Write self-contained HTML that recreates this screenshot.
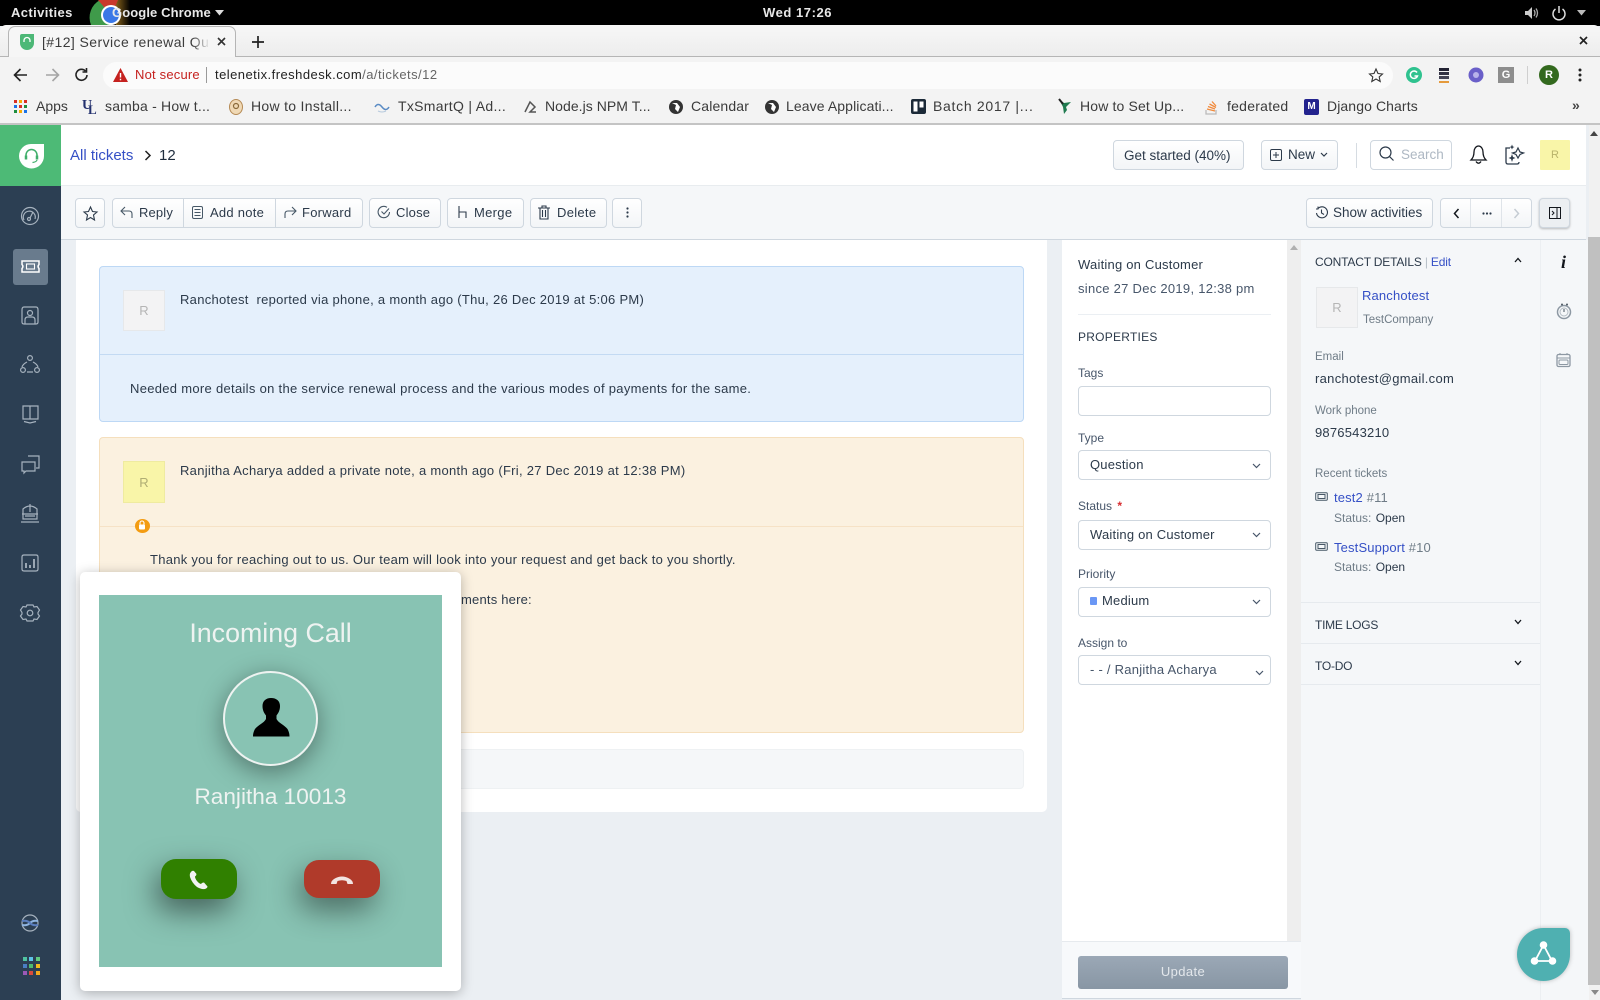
<!DOCTYPE html>
<html><head><meta charset="utf-8"><title>Ticket 12</title>
<style>
*{box-sizing:border-box}
html,body{margin:0;padding:0;width:1600px;height:1000px;overflow:hidden;background:#ebeff3;font-family:"Liberation Sans",sans-serif;color:#1f2d3d}
.a,.t{position:absolute}
.t{white-space:nowrap;line-height:20px;height:20px;font-size:13px;color:#2c3a4a}
.btn{position:absolute;top:198px;height:30px;background:linear-gradient(#fff,#f3f5f7);border:1px solid #cfd7df;border-radius:4px}
svg{position:absolute;overflow:visible;fill:none}
.sel{position:absolute;left:1078px;width:193px;height:30px;background:#fff;border:1px solid #cfd7df;border-radius:4px}
.lbl{color:#47566a;font-size:12px}
.g{color:#6f7c87;font-size:12px}
.lnk{color:#3550c6}
.b{font-size:14px;color:#3b3b3b}
</style></head><body>

<!-- GNOME top bar -->
<div class="a" style="left:0;top:0;width:1600px;height:26px;background:#000"></div>
<svg style="left:88px;top:0" width="42" height="25" viewBox="0 0 42 25">
<defs><linearGradient id="fd" x1="0" x2="1" y1="0" y2="0"><stop offset="0" stop-color="#a87a20"/><stop offset="1" stop-color="#000"/></linearGradient></defs>
<path d="M3 25A20 20 0 0 1 12 0H22V25Z" fill="#3f9a4a"/>
<path d="M10 0H36V14H22Z" fill="#c9392c"/>
<path d="M30 0H42V25H28L24 14Z" fill="url(#fd)"/>
<circle cx="23" cy="15" r="10" fill="#fff"/><circle cx="23" cy="15" r="8" fill="#3b78e7"/></svg>
<div class="t" style="left:11px;top:3px;color:#e8e8e8;font-size:13px;font-weight:bold;letter-spacing:.4px">Activities</div>
<div class="t" style="left:112px;top:3px;color:#e8e8e8;font-size:13px;font-weight:bold;letter-spacing:.1px">Google Chrome</div>
<svg style="left:215px;top:10px" width="10" height="6"><path d="M0 0H9L4.5 5.5Z" fill="#ddd"/></svg>
<div class="t" style="left:763px;top:3px;color:#e8e8e8;font-size:13px;font-weight:bold;letter-spacing:.55px">Wed 17:26</div>
<svg style="left:1524px;top:6px" width="15" height="14"><path d="M1 5H4L8 1V13L4 9H1Z" fill="#ccc"/><path d="M10 4Q12 7 10 10M12 2.5Q15 7 12 11.5" stroke="#aaa" stroke-width="1.3"/></svg>
<svg style="left:1551px;top:5px" width="16" height="16"><path d="M4.5 4A6 6 0 1 0 11.5 4M8 1V8" stroke="#ddd" stroke-width="1.5"/></svg>
<svg style="left:1577px;top:10px" width="10" height="6"><path d="M0 0H9L4.5 5.5Z" fill="#bbb"/></svg>

<!-- Chrome -->
<div class="a" style="left:0;top:25px;width:1600px;height:32px;background:linear-gradient(#f7f7f7,#ededed);border-radius:6px 6px 0 0;border-bottom:1px solid #b5b5b5"></div>
<div class="a" style="left:8px;top:26px;width:228px;height:32px;background:#f6f6f6;border:1px solid #b5b5b5;border-bottom:none;border-radius:7px 7px 0 0"></div>
<svg style="left:19px;top:33px" width="16" height="17"><path d="M1 3Q1 1 3 1H15V10A6 6 0 0 1 1 10Z" fill="#4db877"/><path d="M5 9V7.5A3 3 0 0 1 11 7.5V9" stroke="#fff" stroke-width="1.3"/></svg>
<div class="t" style="left:42px;top:32px;font-size:14px;color:#3c3c3c;width:168px;overflow:hidden;letter-spacing:.42px">[#12] Service renewal Qu</div>
<div class="a" style="left:192px;top:32px;width:18px;height:20px;background:linear-gradient(90deg,rgba(246,246,246,0),#f6f6f6)"></div>
<svg style="left:217px;top:37px" width="9" height="9"><path d="M1 1L8 8M8 1L1 8" stroke="#333" stroke-width="1.6"/></svg>
<svg style="left:251px;top:35px" width="14" height="14"><path d="M7 1V13M1 7H13" stroke="#222" stroke-width="1.7"/></svg>
<svg style="left:1579px;top:36px" width="9" height="9"><path d="M1 1L8 8M8 1L1 8" stroke="#222" stroke-width="1.7"/></svg>

<div class="a" style="left:0;top:57px;width:1600px;height:67px;background:#f3f3f3"></div>
<svg style="left:13px;top:67px" width="16" height="16"><path d="M14 8H2M7.5 2L1.5 8L7.5 14" stroke="#222" stroke-width="1.6"/></svg>
<svg style="left:44px;top:67px" width="16" height="16"><path d="M2 8H14M8.5 2L14.5 8L8.5 14" stroke="#a5a5a5" stroke-width="1.6"/></svg>
<svg style="left:74px;top:67px" width="16" height="16"><path d="M13 8A5.5 5.5 0 1 1 11.5 4M12.5 1V5H8.5" stroke="#222" stroke-width="1.6"/></svg>
<div class="a" style="left:103px;top:62px;width:1290px;height:27px;background:#fbfbfb;border-radius:14px"></div>
<svg style="left:113px;top:68px" width="15" height="14"><path d="M7.5 0L15 14H0Z" fill="#c5221f"/><path d="M7.5 5V9.5M7.5 10.7V12.2" stroke="#fff" stroke-width="1.4"/></svg>
<div class="t" style="left:135px;top:65px;font-size:13px;color:#c5221f;letter-spacing:.2px">Not secure</div>
<div class="a" style="left:206px;top:67px;width:1px;height:16px;background:#9a9a9a"></div>
<div class="t" style="left:215px;top:65px;font-size:13px;color:#222;letter-spacing:.46px">telenetix.freshdesk.com<span style="color:#666">/a/tickets/12</span></div>
<svg style="left:1369px;top:68px" width="14" height="14"><path d="M7 1L9 5.5L13.500 6L10.200 9L11.200 13.500L7 11L2.800 13.500L3.800 9L.5 6L5 5.500Z" stroke="#333" stroke-width="1.100"/></svg>
<svg style="left:1406px;top:67px" width="16" height="16"><circle cx="8" cy="8" r="8" fill="#2fc28f"/><path d="M11 5.5A3.7 3.7 0 1 0 11.5 9H8.5" stroke="#fff" stroke-width="1.5"/></svg>
<svg style="left:1438px;top:68px" width="12" height="16"><rect x="1" y="0" width="10" height="3" fill="#223"/><rect x="1" y="4" width="10" height="3" fill="#334"/><rect x="1" y="8" width="10" height="3" fill="#445"/><rect x="1" y="13" width="10" height="2" fill="#e59a3c"/></svg>
<svg style="left:1468px;top:67px" width="16" height="16"><circle cx="8" cy="8" r="7.5" fill="#6a5fc9"/><circle cx="8" cy="8" r="3" fill="#b8b2ea"/></svg>
<div class="a" style="left:1498px;top:67px;width:16px;height:16px;background:#8d8d8d;color:#fff;font-size:11px;line-height:16px;text-align:center;font-weight:bold">G</div>
<div class="a" style="left:1527px;top:66px;width:1px;height:18px;background:#cfcfcf"></div>
<div class="a" style="left:1539px;top:65px;width:20px;height:20px;background:#33691e;border-radius:50%;color:#fff;font-size:11px;line-height:20px;text-align:center;font-weight:bold">R</div>
<svg style="left:1578px;top:68px" width="4" height="14"><circle cx="2" cy="2" r="1.5" fill="#222"/><circle cx="2" cy="7" r="1.5" fill="#222"/><circle cx="2" cy="12" r="1.5" fill="#222"/></svg>

<!-- Bookmarks -->
<svg style="left:14px;top:100px" width="14" height="14"><g><rect width="3" height="3" fill="#d93025"/><rect x="5" width="3" height="3" fill="#f9ab00"/><rect x="10" width="3" height="3" fill="#d93025"/><rect y="5" width="3" height="3" fill="#1a73e8"/><rect x="5" y="5" width="3" height="3" fill="#d93025"/><rect x="10" y="5" width="3" height="3" fill="#1e8e3e"/><rect y="10" width="3" height="3" fill="#1e8e3e"/><rect x="5" y="10" width="3" height="3" fill="#f9ab00"/><rect x="10" y="10" width="3" height="3" fill="#1a73e8"/></g></svg>
<div class="t b" style="left:36px;top:96px">Apps</div>
<div class="t" style="left:82px;top:96px;font-size:14px;font-weight:bold;color:#23306e;font-family:'Liberation Serif',serif">U</div>
<div class="t" style="left:88px;top:100px;font-size:13px;font-weight:bold;color:#23306e;font-family:'Liberation Serif',serif">L</div>
<div class="t b" style="left:105px;top:96px;letter-spacing:.2px">samba - How t...</div>
<svg style="left:229px;top:99px" width="14" height="16"><ellipse cx="7" cy="8" rx="6.5" ry="7.5" fill="#f0d9b5" stroke="#b58a55"/><circle cx="7" cy="7" r="2.5" stroke="#8a6a3a" stroke-width="1.2"/></svg>
<div class="t b" style="left:251px;top:96px;letter-spacing:.3px">How to Install...</div>
<svg style="left:374px;top:101px" width="16" height="12"><path d="M1 6Q4 1 8 6T15 6" stroke="#5a8bc4" stroke-width="1.5"/><path d="M4 10Q8 12 12 10" stroke="#b6c9dd"/></svg>
<div class="t b" style="left:398px;top:96px;letter-spacing:.3px">TxSmartQ | Ad...</div>
<svg style="left:523px;top:100px" width="15" height="14"><path d="M2 12L7 2L12 7L7 12H13" stroke="#555" stroke-width="1.5"/></svg>
<div class="t b" style="left:545px;top:96px;letter-spacing:.05px">Node.js NPM T...</div>
<svg style="left:669px;top:100px" width="14" height="14"><circle cx="7" cy="7" r="7" fill="#333"/><path d="M3 3L7 5L6 9L9 12L11 7L8 3Z" fill="#fff"/></svg>
<div class="t b" style="left:691px;top:96px;letter-spacing:.15px">Calendar</div>
<svg style="left:765px;top:100px" width="14" height="14"><circle cx="7" cy="7" r="7" fill="#333"/><path d="M3 3L7 5L6 9L9 12L11 7L8 3Z" fill="#fff"/></svg>
<div class="t b" style="left:786px;top:96px;letter-spacing:.1px">Leave Applicati...</div>
<svg style="left:911px;top:99px" width="15" height="15"><rect width="15" height="15" rx="2" fill="#1c2a38"/><rect x="2.5" y="2.5" width="4" height="10" fill="#fff"/><rect x="8.5" y="2.5" width="4" height="6" fill="#fff"/></svg>
<div class="t b" style="left:933px;top:96px;letter-spacing:.7px">Batch 2017 |...</div>
<svg style="left:1058px;top:98px" width="14" height="17"><path d="M1 1L6 5L13 4L8 9L9 12L6 16L5 9Z" fill="#1f7a4f"/><path d="M1 1L5 6" stroke="#222" stroke-width="2"/></svg>
<div class="t b" style="left:1080px;top:96px;letter-spacing:.15px">How to Set Up...</div>
<svg style="left:1205px;top:99px" width="13" height="16"><path d="M2 10L10 12M3 7.5L10 10M4.5 5L11 8.5M7 2.5L11 7" stroke="#f18a3c" stroke-width="1.3"/><path d="M1 11V15H11V11" stroke="#bcbbbb" stroke-width="1.3"/></svg>
<div class="t b" style="left:1227px;top:96px;letter-spacing:.25px">federated</div>
<div class="a" style="left:1304px;top:99px;width:15px;height:16px;background:#23238e;border-radius:2px;color:#fff;font-size:10px;line-height:15px;text-align:center;font-weight:bold">M</div>
<div class="t b" style="left:1327px;top:96px;letter-spacing:.1px">Django Charts</div>
<div class="t" style="left:1572px;top:95px;font-size:14px;color:#444;font-weight:bold">»</div>
<div class="a" style="left:0;top:123px;width:1600px;height:2px;background:#c4c4c4"></div>

<!-- App sidebar -->
<div class="a" style="left:0;top:125px;width:61px;height:875px;background:#2c3f53"></div>
<div class="a" style="left:0;top:125px;width:61px;height:61px;background:#4dba76"></div>
<svg style="left:18px;top:143px" width="27" height="26"><path d="M1 13A12 12 0 0 1 13 1H26V13A12.500 12.500 0 0 1 1 13Z" fill="#fff"/><path d="M8 15V12A5.500 5.500 0 0 1 19 12V15" stroke="#3fae6a" stroke-width="1.500"/><path d="M8 12.500V16.500M19 12.500V16.500" stroke="#3fae6a" stroke-width="2.500"/><path d="M19 17Q18.500 19 14.500 19.500" stroke="#3fae6a" stroke-width="1.200"/></svg>
<div class="a" style="left:13px;top:249px;width:35px;height:36px;background:#697b8d;border-radius:3px"></div>
<svg style="left:0;top:0" width="61" height="1000">
<g stroke="#a6b2be" stroke-width="1.2">
<circle cx="30" cy="216" r="8.500"/><path d="M24 220A6 6 0 1 1 35 219"/><circle cx="29" cy="219" r="1.500"/><path d="M30 218L33 212"/>
<path d="M22 310Q22 307 24 307H36Q38 307 38 310V322Q38 324 36 324H24Q22 324 22 322Z"/><circle cx="30" cy="313" r="2.500"/><path d="M25 324V320Q25 317 28 317H32Q35 317 35 320V324"/>
<circle cx="30" cy="358" r="2.400"/><circle cx="23" cy="370" r="2.400"/><circle cx="37" cy="370" r="2.400"/><path d="M27 362Q23 364 22 367M33 362Q37 364 38 367M27 372H33"/>
<path d="M23 406H30V419H23ZM30 406H38V419H30ZM24 421.500L30 423L36 421.500"/>
<path d="M28 456H39V468H36M22 462H35V471H26L24 473V471H22Z"/>
<path d="M23 514V509Q30 503 37 509V514M22 514H38M23 514V519H37V514M30 504V512M21 522H39M25 516H35"/>
<path d="M22 557Q22 555 24 555H36Q38 555 38 557V569Q38 571 36 571H24Q22 571 22 569Z"/><path d="M26 568V563M30 568V565M34 568V559" stroke-width="1.800"/>
<circle cx="30" cy="613" r="2.800"/><path d="M27 605L33 605L34 607L37 606.500L39.500 610L38 612.500V614L39.500 616L37 619.500L34 619L33 621H27L26 619L23 619.500L20.500 616L22 614V612.500L20.500 610L23 606.500L26 607Z"/>
<circle cx="30" cy="923" r="8"/>
</g>
<path d="M22 261H39V264.500Q37.200 266.500 39 268.500V272H22V268.500Q23.800 266.500 22 264.500Z" stroke="#fff" stroke-width="1.500"/><rect x="26.500" y="264" width="8" height="5" stroke="#fff" stroke-width="1.100"/>
<path d="M22 925Q27 926 30 923T38 921" stroke="#8fb4e0" stroke-width="2"/><path d="M22 921Q27 920 30 923T38 925" stroke="#5b7fc0" stroke-width="2"/>
<g><rect x="23" y="957" width="4" height="4" fill="#4fc3a1"/><rect x="29" y="957" width="4" height="4" fill="#5ec2e6"/><rect x="36" y="957" width="4" height="4" fill="#63c97d"/>
<rect x="23" y="964" width="4" height="4" fill="#4a7fc4"/><rect x="29" y="964" width="4" height="4" fill="#4fbb6e"/><rect x="36" y="964" width="4" height="4" fill="#f2b91c"/>
<rect x="23" y="971" width="4" height="4" fill="#9b59b6"/><rect x="29" y="971" width="4" height="4" fill="#d94b3d"/><rect x="36" y="971" width="4" height="4" fill="#f2a91c"/></g>
</svg>

<!-- Header -->
<div class="a" style="left:61px;top:125px;width:1525px;height:61px;background:#fff;border-bottom:1px solid #e8ecef"></div>
<div class="t" style="left:70px;top:146px;font-size:15px;color:#3550c6">All tickets</div>
<svg style="left:144px;top:150px" width="8" height="11"><path d="M1.5 1L6 5.5L1.500 10" stroke="#222" stroke-width="1.500"/></svg>
<div class="t" style="left:159px;top:146px;font-size:15px;color:#1f2d3d">12</div>
<div class="btn" style="left:1113px;top:140px;width:131px;height:30px"></div>
<div class="t" style="left:1124px;top:146px;font-size:13.500px;color:#2c3a4a">Get started (40%)</div>
<div class="btn" style="left:1261px;top:140px;width:77px;height:30px"></div>
<svg style="left:1270px;top:149px" width="12" height="12"><rect x=".5" y=".5" width="11" height="11" rx="1.500" stroke="#2c3a4a"/><path d="M6 3V9M3 6H9" stroke="#2c3a4a"/></svg>
<div class="t" style="left:1288px;top:145px;font-size:13.500px;color:#2c3a4a">New</div>
<svg style="left:1320px;top:152px" width="8" height="6"><path d="M1 1L4 4L7 1" stroke="#2c3a4a" stroke-width="1.200"/></svg>
<div class="a" style="left:1356px;top:143px;width:1px;height:25px;background:#d6dce2"></div>
<div class="a" style="left:1370px;top:140px;width:82px;height:30px;background:#fff;border:1px solid #cfd7df;border-radius:4px"></div>
<svg style="left:1379px;top:146px" width="15" height="15"><circle cx="6.500" cy="6.500" r="5.500" stroke="#2c3a4a" stroke-width="1.200"/><path d="M10.500 10.500L14.500 14.500" stroke="#2c3a4a" stroke-width="1.200"/></svg>
<div class="t" style="left:1401px;top:145px;font-size:13.500px;color:#aeb8c3">Search</div>
<svg style="left:1469px;top:143px" width="19" height="23"><path d="M2 17Q5 14 5 9A4.500 6 0 0 1 14 9Q14 14 17 17Z" stroke="#12161c" stroke-width="1.300"/><path d="M7 18.500Q9.500 22 12 18.500" stroke="#12161c" stroke-width="1.300"/></svg>
<svg style="left:1503px;top:143px" width="22" height="23"><path d="M7 5H3V19Q3 21 5 21H14Q16 21 16 19" stroke="#2c3a4a" stroke-width="1.300"/><path d="M15 5L17 9L20.500 10L17 11.500L15 15L13 11.500L9.500 10L13 9Z" stroke="#2c3a4a" stroke-width="1.200"/><path d="M9 11L10 14L12.500 15L10 16L9 19L8 16L5.500 15L8 14Z" fill="#2c3a4a"/><path d="M9 1.500L9.800 3.500L11.500 4L9.800 4.700L9 6.500L8.200 4.700L6.500 4L8.200 3.500Z" fill="#2c3a4a"/></svg>
<div class="a" style="left:1540px;top:140px;width:30px;height:30px;background:#f9f5a8;border-radius:1px;color:#b9b36a;font-size:11px;line-height:30px;text-align:center">R</div>

<!-- Toolbar -->
<div class="a" style="left:61px;top:186px;width:1525px;height:54px;background:#f5f7f9;border-bottom:1px solid #cfd7df"></div>
<div class="btn" style="left:75px;width:30px"></div>
<svg style="left:83px;top:206px" width="15" height="15"><path d="M7.500 1L9.500 5.500L14 6L10.500 9L11.500 14L7.500 11.500L3.500 14L4.500 9L1 6L5.500 5.500Z" stroke="#2c3a4a" stroke-width="1.100"/></svg>
<div class="btn" style="left:112px;width:251px"></div>
<div class="a" style="left:183px;top:199px;width:1px;height:28px;background:#cfd7df"></div>
<div class="a" style="left:275px;top:199px;width:1px;height:28px;background:#cfd7df"></div>
<svg style="left:120px;top:205px" width="14" height="14"><path d="M5 2L1 6L5 10M1 6H9Q12 6 12 9V13" stroke="#475867" stroke-width="1.100"/></svg>
<div class="t" style="left:139px;top:203px;color:#2c3a4a;letter-spacing:.15px">Reply</div>
<svg style="left:192px;top:206px" width="11" height="14"><rect x=".5" y=".5" width="10" height="12" rx="1.500" stroke="#475867"/><path d="M2.500 3.500H8.500M2.500 6.500H8.500M2.500 9.500H8.500" stroke="#475867"/></svg>
<div class="t" style="left:210px;top:203px;color:#2c3a4a;letter-spacing:.25px">Add note</div>
<svg style="left:283px;top:205px" width="14" height="14"><path d="M9 2L13 6L9 10M13 6H5Q2 6 2 9V13" stroke="#475867" stroke-width="1.100"/></svg>
<div class="t" style="left:302px;top:203px;color:#2c3a4a;letter-spacing:.25px">Forward</div>
<div class="btn" style="left:369px;width:72px"></div>
<svg style="left:377px;top:205px" width="14" height="14"><path d="M12.500 7A5.700 5.700 0 1 1 10 2.300" stroke="#475867" stroke-width="1.100"/><path d="M4.500 6.500L7 9L12 3.500" stroke="#475867" stroke-width="1.100"/></svg>
<div class="t" style="left:396px;top:203px;color:#2c3a4a;letter-spacing:.2px">Close</div>
<div class="btn" style="left:447px;width:77px"></div>
<svg style="left:457px;top:205px" width="11" height="14"><path d="M2 1V13M2 7H9V13" stroke="#2c3a4a" stroke-width="1.100"/></svg>
<div class="t" style="left:474px;top:203px;color:#2c3a4a;letter-spacing:.3px">Merge</div>
<div class="btn" style="left:530px;width:77px"></div>
<svg style="left:538px;top:205px" width="12" height="15"><path d="M0 3H12M4 3V1H8V3M2 3V14H10V3M4.500 5V12M7.500 5V12" stroke="#2c3a4a" stroke-width="1.100"/></svg>
<div class="t" style="left:557px;top:203px;color:#2c3a4a;letter-spacing:.3px">Delete</div>
<div class="btn" style="left:612px;width:30px"></div>
<svg style="left:626px;top:207px" width="3" height="11"><circle cx="1.500" cy="1.500" r="1.100" fill="#2c3a4a"/><circle cx="1.500" cy="5.500" r="1.100" fill="#2c3a4a"/><circle cx="1.500" cy="9.500" r="1.100" fill="#2c3a4a"/></svg>

<div class="btn" style="left:1306px;width:127px"></div>
<svg style="left:1315px;top:206px" width="13" height="13"><path d="M3 2.500A5.500 5.500 0 1 1 1.500 7M6.500 3.500V7L9 8.500" stroke="#2c3a4a" stroke-width="1.100"/><path d="M3 .5V3H1" stroke="#2c3a4a"/></svg>
<div class="t" style="left:1333px;top:203px;font-size:13.500px;color:#2c3a4a">Show activities</div>
<div class="btn" style="left:1440px;width:92px"></div>
<div class="a" style="left:1470px;top:199px;width:1px;height:28px;background:#dfe4e9"></div>
<div class="a" style="left:1501px;top:199px;width:1px;height:28px;background:#dfe4e9"></div>
<svg style="left:1453px;top:208px" width="7" height="11"><path d="M5.500 1L1.500 5.500L5.500 10" stroke="#12161c" stroke-width="1.500"/></svg>
<svg style="left:1482px;top:212px" width="10" height="3"><circle cx="1.500" cy="1.500" r="1.100" fill="#2c3a4a"/><circle cx="5" cy="1.500" r="1.100" fill="#2c3a4a"/><circle cx="8.500" cy="1.500" r="1.100" fill="#2c3a4a"/></svg>
<svg style="left:1513px;top:208px" width="7" height="11"><path d="M1.500 1L5.500 5.500L1.500 10" stroke="#c5ccd3" stroke-width="1.500"/></svg>
<div class="btn" style="left:1539px;width:31px;background:#eceff2;box-shadow:0 1px 2px rgba(0,0,0,.25)"></div>
<svg style="left:1549px;top:207px" width="12" height="12"><rect x=".5" y=".5" width="11" height="11" stroke="#12161c"/><path d="M8 .5V11.500" stroke="#12161c"/><path d="M3 4L5 6L3 8" stroke="#12161c"/></svg>

<!-- Main ticket card -->
<div class="a" style="left:76px;top:240px;width:971px;height:572px;background:#fff;border-radius:0 0 5px 5px"></div>
<div class="a" style="left:99px;top:266px;width:925px;height:156px;background:#e5f0fc;border:1px solid #bdd8f5;border-radius:4px"></div>
<div class="a" style="left:100px;top:354px;width:923px;height:1px;background:#c3daf3"></div>
<div class="a" style="left:123px;top:290px;width:42px;height:41px;background:#f3f3f4;border:1px solid #e6e8ea;color:#b5b5b5;font-size:13px;line-height:40px;text-align:center">R</div>
<div class="t" style="left:180px;top:290px;letter-spacing:.29px">Ranchotest&nbsp; reported via phone, a month ago (Thu, 26 Dec 2019 at 5:06 PM)</div>
<div class="t" style="left:130px;top:378.500px;letter-spacing:.3px">Needed more details on the service renewal process and the various modes of payments for the same.</div>

<div class="a" style="left:99px;top:437px;width:925px;height:296px;background:#fbf1e0;border:1px solid #f5dfbd;border-radius:4px"></div>
<div class="a" style="left:100px;top:526px;width:923px;height:1px;background:#f6e2c6"></div>
<div class="a" style="left:123px;top:461px;width:42px;height:42px;background:#f9f5a8;border:1px solid #efeba0;color:#b0ad74;font-size:13px;line-height:41px;text-align:center">R</div>
<div class="t" style="left:180px;top:461px;letter-spacing:.29px">Ranjitha Acharya added a private note, a month ago (Fri, 27 Dec 2019 at 12:38 PM)</div>
<div class="a" style="left:134.500px;top:518.500px;width:15px;height:14px;border-radius:50%;background:#f39c12"></div>
<svg style="left:138px;top:520px" width="8" height="10"><path d="M2 4.500V3A2 2 0 0 1 6 3V4.500" stroke="#fff" stroke-width="1.100"/><rect x="1" y="4.500" width="6" height="5" rx="1" fill="#fff"/></svg>
<div class="t" style="left:150px;top:549.500px;letter-spacing:.27px">Thank you for reaching out to us. Our team will look into your request and get back to you shortly.</div>
<div class="t" style="left:461px;top:589.500px;letter-spacing:.2px">ments here:</div>
<div class="a" style="left:99px;top:749px;width:925px;height:40px;background:#f5f7f9;border:1px solid #eef1f3;border-radius:4px"></div>

<!-- Properties panel -->
<div class="a" style="left:1062px;top:240px;width:225px;height:702px;background:#fff"></div>
<div class="a" style="left:1287px;top:240px;width:14px;height:702px;background:#eeeeee"></div>
<svg style="left:1290px;top:245px" width="8" height="5"><path d="M0 5H8L4 0Z" fill="#b0b0b0"/></svg>
<div class="t" style="left:1078px;top:255px;letter-spacing:.22px">Waiting on Customer</div>
<div class="t" style="left:1078px;top:279px;letter-spacing:.28px;color:#47566a">since 27 Dec 2019, 12:38 pm</div>
<div class="a" style="left:1078px;top:314px;width:193px;height:1px;background:#ebeff3"></div>
<div class="t" style="left:1078px;top:327px;font-size:12px;color:#2c3a4a;letter-spacing:.25px">PROPERTIES</div>
<div class="t lbl" style="left:1078px;top:363px">Tags</div>
<div class="sel" style="top:386px"></div>
<div class="t lbl" style="left:1078px;top:428px">Type</div>
<div class="sel" style="top:450px"></div>
<div class="t" style="left:1090px;top:455px;letter-spacing:.2px">Question</div>
<div class="t lbl" style="left:1078px;top:496px">Status <span style="color:#d72d30;font-weight:bold;margin-left:2px">*</span></div>
<div class="sel" style="top:520px"></div>
<div class="t" style="left:1090px;top:525px;letter-spacing:.2px">Waiting on Customer</div>
<div class="t lbl" style="left:1078px;top:564px">Priority</div>
<div class="sel" style="top:587px"></div>
<div class="a" style="left:1090px;top:597px;width:7px;height:8px;background:#6a97f5;border-radius:1px"></div>
<div class="t" style="left:1102px;top:591px;letter-spacing:.2px">Medium</div>
<div class="t lbl" style="left:1078px;top:633px">Assign to</div>
<div class="sel" style="top:655px"></div>
<div class="t" style="left:1090px;top:660px;letter-spacing:.25px;color:#47566a">- - / Ranjitha Acharya</div>
<svg style="left:1252px;top:463px" width="9" height="6"><path d="M1 1L4.500 4.500L8 1" stroke="#47566a" stroke-width="1.200"/></svg>
<svg style="left:1252px;top:532px" width="9" height="6"><path d="M1 1L4.500 4.500L8 1" stroke="#47566a" stroke-width="1.200"/></svg>
<svg style="left:1252px;top:599px" width="9" height="6"><path d="M1 1L4.500 4.500L8 1" stroke="#47566a" stroke-width="1.200"/></svg>
<svg style="left:1255px;top:670px" width="9" height="6"><path d="M1 1L4.500 4.500L8 1" stroke="#47566a" stroke-width="1.200"/></svg>

<!-- Update footer -->
<div class="a" style="left:1062px;top:941px;width:239px;height:58px;background:#f7f9fb;border-top:1px solid #e6eaee;border-bottom:1px solid #cfd7df"></div>
<div class="a" style="left:1078px;top:956px;width:210px;height:33px;background:linear-gradient(#9ba8b6,#8896a4);border-radius:3px;color:#e3e7eb;font-size:13px;line-height:32px;text-align:center;letter-spacing:.4px">Update</div>

<!-- Contact panel -->
<div class="a" style="left:1301px;top:240px;width:239px;height:760px;background:#f5f7f9"></div>
<div class="a" style="left:1540px;top:240px;width:49px;height:760px;background:#f5f7f9;border-left:1px solid #eceff2"></div>
<div class="a" style="left:1589px;top:125px;width:11px;height:875px;background:#f1f1f1"></div>
<div class="a" style="left:1588px;top:237px;width:12px;height:748px;background:#c0c0c0"></div>
<svg style="left:1590px;top:131px" width="8" height="5"><path d="M0 5H8L4 0Z" fill="#444"/></svg>
<svg style="left:1591px;top:990px" width="8" height="5"><path d="M0 0H8L4 5Z" fill="#888"/></svg>
<div class="t" style="left:1315px;top:252px;font-size:12px;color:#2c3a4a;letter-spacing:-.18px">CONTACT DETAILS <span style="color:#b6bec6">|</span> <span class="lnk">Edit</span></div>
<svg style="left:1514px;top:257px" width="8" height="6"><path d="M1 5L4 1.500L7 5" stroke="#12161c" stroke-width="1.300"/></svg>
<div class="a" style="left:1316px;top:287px;width:42px;height:41px;background:#f3f3f4;border:1px solid #e6e8ea;color:#b5b5b5;font-size:13px;line-height:40px;text-align:center">R</div>
<div class="t lnk" style="left:1362px;top:286px;letter-spacing:.15px">Ranchotest</div>
<div class="t g" style="left:1363px;top:310px;font-size:11.500px">TestCompany</div>
<div class="t g" style="left:1315px;top:347px;font-size:11.500px">Email</div>
<div class="t" style="left:1315px;top:369px;letter-spacing:.3px">ranchotest@gmail.com</div>
<div class="t g" style="left:1315px;top:401px;font-size:11.500px">Work phone</div>
<div class="t" style="left:1315px;top:423px;letter-spacing:.2px">9876543210</div>
<div class="t g" style="left:1315px;top:464px;font-size:11.500px">Recent tickets</div>
<svg style="left:1315px;top:492px" width="13" height="9"><rect x=".7" y=".7" width="11.600" height="7.600" rx="1" stroke="#475867"/><rect x="3" y="2.500" width="7" height="4" stroke="#475867"/></svg>
<div class="t" style="left:1334px;top:487.500px;letter-spacing:.15px"><span class="lnk">test2</span> <span style="color:#6f7c87">#11</span></div>
<div class="t g" style="left:1334px;top:507.500px">Status: <span style="color:#2c3a4a;margin-left:1px">Open</span></div>
<svg style="left:1315px;top:542px" width="13" height="9"><rect x=".7" y=".7" width="11.600" height="7.600" rx="1" stroke="#475867"/><rect x="3" y="2.500" width="7" height="4" stroke="#475867"/></svg>
<div class="t" style="left:1334px;top:537.500px;letter-spacing:.15px"><span class="lnk">TestSupport</span> <span style="color:#6f7c87">#10</span></div>
<div class="t g" style="left:1334px;top:556.500px">Status: <span style="color:#2c3a4a;margin-left:1px">Open</span></div>
<div class="a" style="left:1301px;top:602px;width:239px;height:1px;background:#e6eaee"></div>
<div class="t" style="left:1315px;top:614.500px;font-size:12px;color:#2c3a4a;letter-spacing:-.25px">TIME LOGS</div>
<svg style="left:1514px;top:619px" width="8" height="6"><path d="M1 1L4 4.500L7 1" stroke="#12161c" stroke-width="1.300"/></svg>
<div class="a" style="left:1301px;top:643px;width:239px;height:1px;background:#e6eaee"></div>
<div class="t" style="left:1315px;top:655.500px;font-size:12px;color:#2c3a4a;letter-spacing:-.25px">TO-DO</div>
<svg style="left:1514px;top:660px" width="8" height="6"><path d="M1 1L4 4.500L7 1" stroke="#12161c" stroke-width="1.300"/></svg>
<div class="a" style="left:1301px;top:684px;width:239px;height:1px;background:#e6eaee"></div>

<!-- Rail icons -->
<div class="t" style="left:1561px;top:252px;font-family:'Liberation Serif',serif;font-size:18px;font-weight:bold;font-style:italic;color:#12161c">i</div>
<svg style="left:1556px;top:303px" width="16" height="16"><circle cx="8" cy="9" r="6.500" stroke="#8d98a3" stroke-width="1.500"/><circle cx="8" cy="9" r="4" stroke="#b3bbc3"/><path d="M8 6V9" stroke="#5f6b76" stroke-width="1.200"/><circle cx="6" cy="1.500" r="1" fill="#4d5863"/><circle cx="11" cy="1.500" r="1" fill="#4d5863"/></svg>
<svg style="left:1556px;top:352px" width="16" height="16"><rect x="1" y="2.500" width="13" height="12" rx="1.500" stroke="#8d98a3" stroke-width="1.300"/><path d="M1 6H14M4 1V3M11 1V3" stroke="#8d98a3"/><rect x="3" y="8" width="9" height="4.500" rx="1" stroke="#8d98a3"/></svg>

<!-- Fab -->
<div class="a" style="left:1517px;top:928px;width:53px;height:53px;background:#4fb0b1;border-radius:50% 5px 50% 50%;box-shadow:0 0 5px rgba(0,0,0,.25)"></div>
<svg style="left:1528px;top:940px" width="32" height="30"><path d="M15.500 5L7 21H24Z" stroke="#fff" stroke-width="1.800"/><circle cx="15.500" cy="5" r="3.800" fill="#fff"/><circle cx="6.500" cy="21" r="3.800" fill="#fff"/><circle cx="24.500" cy="21" r="3.800" fill="#fff"/></svg>

<!-- Incoming call popup -->
<div class="a" style="left:80px;top:572px;width:381px;height:419px;background:#fff;border-radius:5px;box-shadow:0 2px 12px rgba(0,0,0,.28)"></div>
<div class="a" style="left:99px;top:595px;width:343px;height:372px;background:#88c3b3"></div>
<div class="a" style="left:99px;top:618px;width:343px;height:30px;line-height:30px;text-align:center;font-size:26.800px;color:#eef3f1">Incoming Call</div>
<div class="a" style="left:223px;top:671px;width:95px;height:95px;border-radius:50%;background:#88c3b3;border:2px solid #eef3f1;box-shadow:0 6px 26px rgba(0,0,0,.4)"></div>
<svg style="left:253px;top:698px" width="37" height="39"><path d="M18 0C13 0 9.500 3 9.500 8C9.500 12 11 15 13 17.500V21C11 25 5 27 2 31C1 33 0 35 0 38.500H36.500C36.500 35 35.500 33 34.500 31C31.500 27 25.500 25 23.500 21V17.500C25.500 15 27 12 27 8C27 3 23.500 0 18 0Z" fill="#000"/></svg>
<div class="a" style="left:99px;top:782px;width:343px;height:30px;line-height:30px;text-align:center;font-size:22.600px;color:#eef3f1">Ranjitha 10013</div>
<div class="a" style="left:161px;top:859px;width:76px;height:40px;background:#308000;border-radius:15px;box-shadow:-5px 12px 30px rgba(0,0,0,.5)"></div>
<svg style="left:189px;top:870px" width="20" height="20"><path d="M3 1Q0 3 1 7Q3 13 8 17Q12 19.500 16 19Q18.500 18 18.500 16.500L15 12.500Q13 12.500 12 14Q10 13.500 8 11Q6 8.500 6 6.500Q7.500 5.500 7.500 4L5 1Q4 .5 3 1Z" fill="#f2f2f2"/></svg>
<div class="a" style="left:304px;top:860px;width:76px;height:38px;background:#b03a2a;border-radius:15px;box-shadow:-5px 12px 30px rgba(0,0,0,.45)"></div>
<svg style="left:331px;top:875px" width="22" height="10"><path d="M0 9Q0 6 3 4Q11 -1 19 4Q22 6 22 9H16.500L15.500 6Q11 4.500 6.500 6L5.500 9Z" fill="#f2e4e2"/></svg>
</body></html>
